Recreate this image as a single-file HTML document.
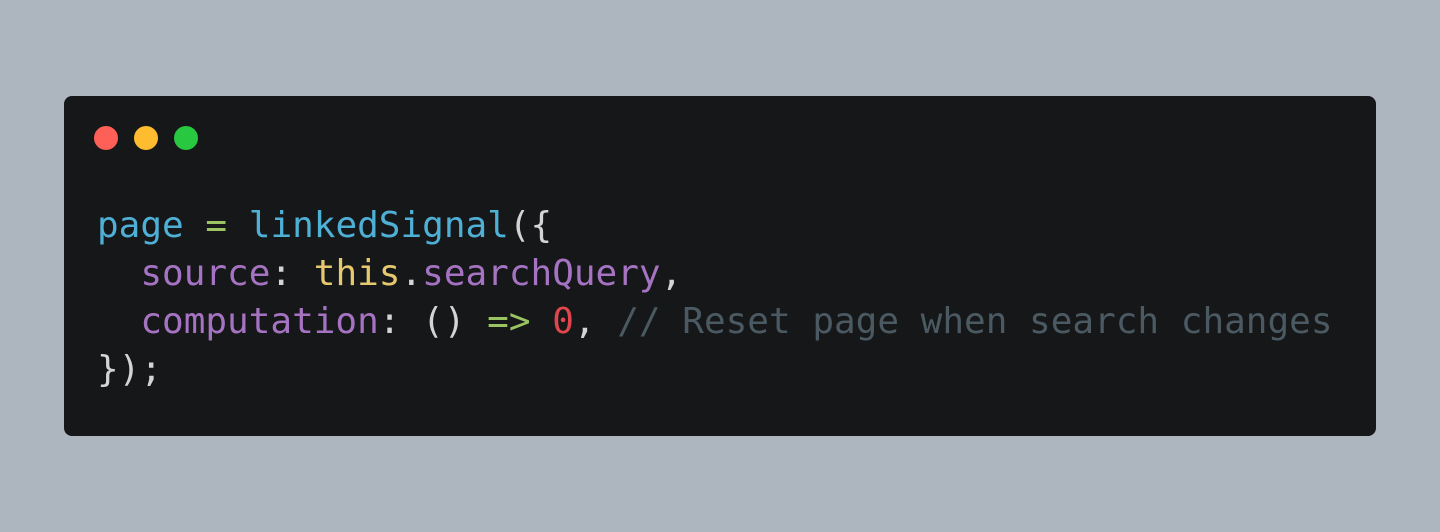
<!DOCTYPE html>
<html><head><style>
html,body{margin:0;padding:0;}
body{width:1440px;height:532px;background:#adb5bf;position:relative;overflow:hidden;}
.card{position:absolute;left:64px;top:96px;width:1312px;height:340px;background:#161719;border-radius:8px;}
.dot{position:absolute;top:30px;width:24px;height:24px;border-radius:50%;}
pre{position:absolute;left:33px;top:106px;margin:0;font-family:"DejaVu Sans Mono","Liberation Mono",monospace;font-size:36px;line-height:48px;color:#d4d4d4;}
.b{color:#4fb0d6}.g{color:#9ac461}.p{color:#a673c3}.y{color:#e6c86e}.r{color:#e0464e}.c{color:#4b5a62}
</style></head><body>
<div class="card">
<div class="dot" style="left:30px;background:#fe5f57"></div>
<div class="dot" style="left:70px;background:#febc2e"></div>
<div class="dot" style="left:110px;background:#28c840"></div>
<pre><span class="b">page</span> <span class="g">=</span> <span class="b">linkedSignal</span>({
  <span class="p">source</span>: <span class="y">this</span>.<span class="p">searchQuery</span>,
  <span class="p">computation</span>: () <span class="g">=&gt;</span> <span class="r">0</span>, <span class="c">// Reset page when search changes</span>
});</pre>
</div>
</body></html>
